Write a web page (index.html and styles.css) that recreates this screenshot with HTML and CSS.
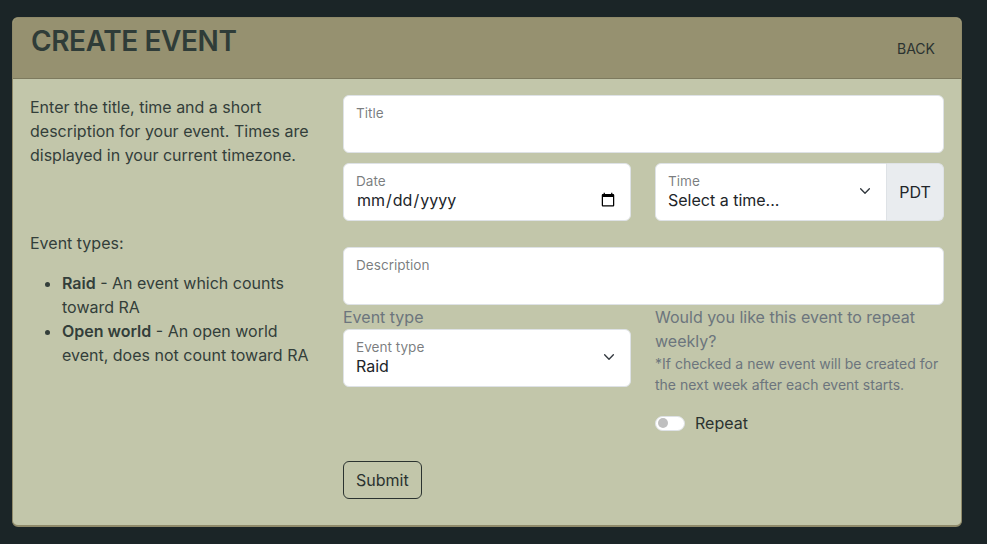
FILE: index.html
```html
<!DOCTYPE html>
<html>
<head>
<meta charset="utf-8">
<link rel="stylesheet" href="styles.css">
</head>
<body>
<div class="page">
  <div class="card">
    <div class="card-header">
      <h2 class="title">CREATE EVENT</h2>
      <a class="back">BACK</a>
    </div>
    <div class="card-body">
      <div class="col-left">
        <p class="intro">Enter the title, time and a short description for your event. Times are displayed in your current timezone.</p>
        <p class="types-head">Event types:</p>
        <ul class="types">
          <li><b>Raid</b> - An event which counts toward RA</li>
          <li><b>Open world</b> - An open world event, does not count toward RA</li>
        </ul>
      </div>
      <div class="col-right">
        <div class="float field">
          <input class="control" type="text">
          <label>Title</label>
        </div>
        <div class="row2 gap-top">
          <div class="float field">
            <input class="control date" type="date">
            <label>Date</label>
          </div>
          <div class="group">
            <div class="float field grow">
              <select class="control select"><option>Select a time...</option></select>
              <label>Time</label>
              <svg class="chev" width="14" height="14" viewBox="0 0 16 16"><path d="M3 5.5l5 5 5-5" fill="none" stroke="#343a40" stroke-width="1.6" stroke-linecap="round" stroke-linejoin="round"/></svg>
            </div>
            <span class="addon">PDT</span>
          </div>
        </div>
        <div class="float field desc">
          <input class="control" type="text">
          <label>Description</label>
        </div>
        <div class="row2">
          <div>
            <div class="muted">Event type</div>
            <div class="float field">
              <select class="control select"><option>Raid</option></select>
              <label>Event type</label>
              <svg class="chev" width="14" height="14" viewBox="0 0 16 16"><path d="M3 5.5l5 5 5-5" fill="none" stroke="#343a40" stroke-width="1.6" stroke-linecap="round" stroke-linejoin="round"/></svg>
            </div>
          </div>
          <div>
            <div class="muted">Would you like this event to repeat weekly?</div>
            <div class="muted small">*If checked a new event will be created for the next week after each event starts.</div>
            <div class="switch-row">
              <span class="switch"><span class="knob"></span></span>
              <span>Repeat</span>
            </div>
          </div>
        </div>
        <button class="submit" type="button">Submit</button>
      </div>
    </div>
  </div>
</div>
</body>
</html>
```
FILE: styles.css
```css
* { box-sizing: border-box; }
html, body { margin: 0; padding: 0; }
body {
  background: #1b2527;
  font-family: Inter, "Noto Sans", sans-serif;
  font-size: 16px;
  line-height: 1.5;
  color: #333e3a;
  width: 987px;
  height: 544px;
  overflow: hidden;
}
.page { padding: 17px 25px 0 12px; }
.card {
  background: #c2c6aa;
  border: 1px solid #8f8a6a;
  border-bottom-width: 2px;
  border-radius: 6px;
  height: 510px;
  overflow: hidden;
}
.card-header {
  background: #969170;
  border-bottom: 1px solid #7d7a5e;
  height: 61px;
  display: flex;
  justify-content: space-between;
  align-items: flex-start;
  padding: 0 26px 0 18px;
}
.title {
  margin: 7px 0 0;
  font-size: 28px;
  font-weight: 600;
  letter-spacing: -0.4px;
  color: #2f3c38;
  line-height: 1.2;
}
.back {
  margin-top: 20px;
  font-size: 14px;
  color: #2b3330;
}
.card-body {
  display: flex;
  padding: 16px 17px 16px 17px;
}
.col-left { width: 289px; flex: none; }
.col-right { width: 601px; margin-left: 24px; flex: none; }
.intro { margin: 0 0 64px; }
.types-head { margin: 0 0 16px; }
.types { margin: 0; padding-left: 32px; }
.types b { font-weight: 600; }
.float { position: relative; }
.control {
  display: block;
  width: 100%;
  height: 58px;
  border: 1px solid #dee2e6;
  border-radius: 6px;
  background: #fff;
  font: inherit;
  color: #212529;
  padding: 24px 12px 8px;
  line-height: 1.5;
  outline: none;
}
.float label {
  position: absolute;
  left: 13px;
  top: 8px;
  font-size: 13.6px;
  line-height: 1.5;
  color: rgba(33,37,41,.6);
  pointer-events: none;
}
.select { appearance: none; -webkit-appearance: none; padding-right: 40px; }
.chev { position: absolute; right: 15px; top: 21px; }
.date { padding-right: 12px; }
.gap-top { margin-top: 10px; }
.row2 {
  display: grid;
  grid-template-columns: 288px 289px;
  column-gap: 24px;
}
.group { display: flex; }
.grow { flex: 1; }
.group .control { border-top-right-radius: 0; border-bottom-right-radius: 0; }
.addon {
  width: 57px;
  height: 58px;
  display: flex;
  align-items: center;
  justify-content: center;
  background: #e9ecef;
  border: 1px solid #dee2e6;
  border-left: 0;
  border-radius: 0 6px 6px 0;
  color: #212529;
}
.desc { margin-top: 26px; }
.muted { color: #6c757d; }
.small { font-size: 14px; line-height: 1.5; }
.switch-row { display: flex; align-items: center; gap: 10px; margin-top: 16px; color: #2b3330; }
.switch {
  width: 30px;
  height: 15px;
  border-radius: 8px;
  background: #fff;
  position: relative;
  border: 1px solid #dee2e6;
}
.knob {
  position: absolute;
  left: 2px;
  top: 1.5px;
  width: 10px;
  height: 10px;
  border-radius: 50%;
  background: #bfbfbf;
}
.submit {
  margin-top: 26px;
  font: inherit;
  color: #2b3330;
  background: transparent;
  border: 1px solid #2b3330;
  border-radius: 6px;
  padding: 6px 12px;
  line-height: 1.5;
}
```
